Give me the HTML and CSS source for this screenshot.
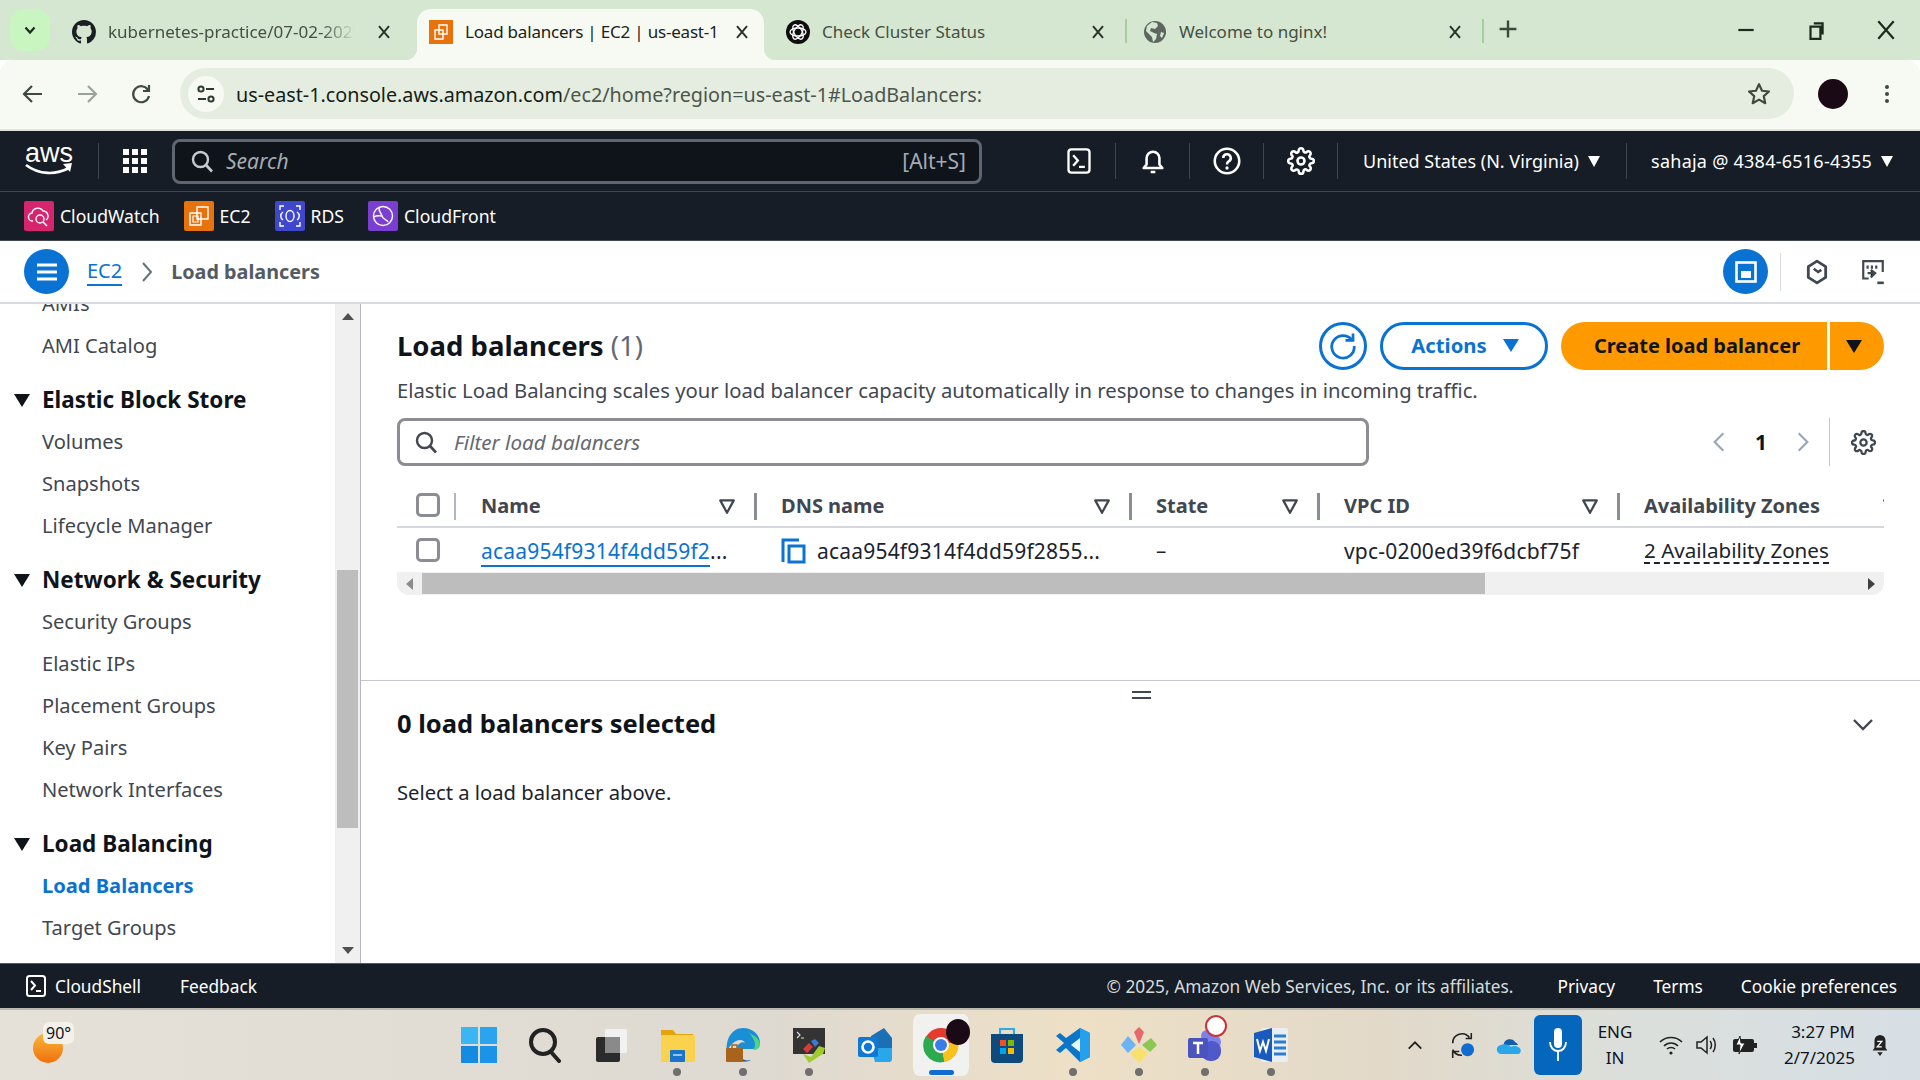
FILE: index.html
```html
<!DOCTYPE html>
<html lang="en">
<head>
    <meta charset="UTF-8">
    <title>Load balancers | EC2 | us-east-1</title>
    <link rel="stylesheet" href="styles.css">
</head>
<body>
    <svg class="defs" width="0" height="0">
        <symbol id="gear" viewBox="0 0 24 24"><path fill="none" stroke="currentColor" stroke-width="2.2" d="M12 15a3 3 0 1 0 0-6 3 3 0 0 0 0 6z"/><path fill="none" stroke="currentColor" stroke-width="2.2" stroke-linejoin="round" d="M19.4 15a1.65 1.65 0 0 0 .33 1.82l.06.06a2 2 0 0 1 0 2.83 2 2 0 0 1-2.83 0l-.06-.06a1.65 1.65 0 0 0-1.82-.33 1.65 1.65 0 0 0-1 1.51V21a2 2 0 0 1-2 2 2 2 0 0 1-2-2v-.09A1.65 1.65 0 0 0 9 19.4a1.65 1.65 0 0 0-1.82.33l-.06.06a2 2 0 0 1-2.83 0 2 2 0 0 1 0-2.83l.06-.06a1.65 1.65 0 0 0 .33-1.82 1.65 1.65 0 0 0-1.51-1H3a2 2 0 0 1-2-2 2 2 0 0 1 2-2h.09A1.65 1.65 0 0 0 4.6 9a1.65 1.65 0 0 0-.33-1.82l-.06-.06a2 2 0 0 1 0-2.83 2 2 0 0 1 2.83 0l.06.06a1.65 1.65 0 0 0 1.82.33H9a1.65 1.65 0 0 0 1-1.51V3a2 2 0 0 1 2-2 2 2 0 0 1 2 2v.09a1.65 1.65 0 0 0 1 1.51 1.65 1.65 0 0 0 1.82-.33l.06-.06a2 2 0 0 1 2.83 0 2 2 0 0 1 0 2.83l-.06.06a1.65 1.65 0 0 0-.33 1.82V9a1.65 1.65 0 0 0 1.51 1H21a2 2 0 0 1 2 2 2 2 0 0 1-2 2h-.09a1.65 1.65 0 0 0-1.51 1z"/></symbol>
        <symbol id="close" viewBox="0 0 24 24"><path fill="none" stroke="currentColor" stroke-width="2.4" d="M6 5l12 14M18 5L6 19"/></symbol>
        <symbol id="shell" viewBox="0 0 24 24"><rect x="3" y="2" width="18" height="20" rx="2.5" fill="none" stroke="currentColor" stroke-width="2"/><path fill="none" stroke="currentColor" stroke-width="2" d="M7 7l4 4.5L7 16M12 17h5"/></symbol>
        <symbol id="filter" viewBox="0 0 16 16"><path fill="none" stroke="currentColor" stroke-width="2" stroke-linejoin="round" d="M2 3h12l-6 11z"/></symbol>
        <symbol id="search" viewBox="0 0 24 24"><circle cx="10.5" cy="10.5" r="7.5" fill="none" stroke="currentColor" stroke-width="2.4"/><path stroke="currentColor" stroke-width="2.6" d="M16 16l6 6.5"/></symbol>
    </svg>

    <!-- chrome tabs -->
    <div class="tabstrip">
        <div class="tab-search"><svg width="14" height="14" viewBox="0 0 14 14"><path fill="none" stroke="#1c2b1c" stroke-width="2.2" d="M2.5 4.5L7 9.5l4.5-5"/></svg></div>
        <div class="tab">
            <svg class="favicon" viewBox="0 0 16 16"><path fill="#1b1f23" d="M8 0C3.58 0 0 3.58 0 8c0 3.54 2.29 6.53 5.47 7.59.4.07.55-.17.55-.38 0-.19-.01-.82-.01-1.49-2.01.37-2.53-.49-2.69-.94-.09-.23-.48-.94-.82-1.13-.28-.15-.68-.52-.01-.53.63-.01 1.08.58 1.23.82.72 1.21 1.87.87 2.33.66.07-.52.28-.87.51-1.07-1.78-.2-3.64-.89-3.64-3.95 0-.87.31-1.59.82-2.15-.08-.2-.36-1.02.08-2.12 0 0 .67-.21 2.2.82.64-.18 1.32-.27 2-.27s1.36.09 2 .27c1.53-1.04 2.2-.82 2.2-.82.44 1.1.16 1.92.08 2.12.51.56.82 1.27.82 2.15 0 3.07-1.87 3.75-3.65 3.95.29.25.54.73.54 1.48 0 1.07-.01 1.93-.01 2.2 0 .21.15.46.55.38A8.01 8.01 0 0016 8c0-4.42-3.58-8-8-8z"/></svg>
            <span class="tab-title tab-fade">kubernetes-practice/07-02-2025</span>
            <svg class="tab-x"><use href="#close"/></svg>
        </div>
        <div class="tab tab-active">
            <svg class="favicon" viewBox="0 0 24 24"><rect width="24" height="24" fill="#e8730c"/><path fill="none" stroke="#fff" stroke-width="1.4" d="M10 5h8v9h-8zM6 10h8v9H6z"/></svg>
            <span class="tab-title">Load balancers | EC2 | us-east-1</span>
            <svg class="tab-x"><use href="#close"/></svg>
        </div>
        <div class="tab tab-sep">
            <svg class="favicon" viewBox="0 0 24 24"><circle cx="12" cy="12" r="12" fill="#0d0d0d"/><g fill="none" stroke="#fff" stroke-width="1.3"><ellipse cx="12" cy="12" rx="8" ry="4"/><ellipse cx="12" cy="12" rx="8" ry="4" transform="rotate(60 12 12)"/><ellipse cx="12" cy="12" rx="8" ry="4" transform="rotate(120 12 12)"/></g></svg>
            <span class="tab-title">Check Cluster Status</span>
            <svg class="tab-x"><use href="#close"/></svg>
        </div>
        <div class="tab tab-sep">
            <svg class="favicon" viewBox="0 0 24 24"><circle cx="12" cy="12" r="11" fill="#5f6660"/><path fill="#d5e7d0" d="M9 2l5 1 1 3-3 3-4-1-1 3 4 2 3 1-1 5-3 3-1-5-3-3-3-3 1-5z M18 12l3 1-2 5-2-2z"/></svg>
            <span class="tab-title">Welcome to nginx!</span>
            <svg class="tab-x"><use href="#close"/></svg>
        </div>
        <svg class="tab-new" viewBox="0 0 20 20"><path stroke="#3b4a3b" stroke-width="2" d="M10 3v14M3 10h14"/></svg>
        <div class="win-controls">
            <svg viewBox="0 0 20 20"><path stroke="#1c2b1c" stroke-width="2" d="M3 10h14"/></svg>
            <svg viewBox="0 0 20 20"><path fill="none" stroke="#1c2b1c" stroke-width="2" d="M5 7h9v11H5zM8 4h8v10"/></svg>
            <svg viewBox="0 0 20 20"><path stroke="#1c2b1c" stroke-width="2" d="M3 2l14 16M17 2L3 18"/></svg>
        </div>
    </div>

    <!-- chrome toolbar -->
    <div class="toolbar">
        <svg class="tool-ico" viewBox="0 0 24 24"><path fill="none" stroke="#3f4a3f" stroke-width="2.2" d="M21 12H4M11 4l-8 8 8 8"/></svg>
        <svg class="tool-ico" viewBox="0 0 24 24"><path fill="none" stroke="#9aa39a" stroke-width="2.2" d="M3 12h17M13 4l8 8-8 8"/></svg>
        <svg class="tool-ico" viewBox="0 0 24 24"><path fill="none" stroke="#3f4a3f" stroke-width="2.2" d="M19 8a8 8 0 1 0 1 6M20 3v6h-6"/></svg>
        <div class="omnibox">
            <div class="site-info"><svg width="22" height="22" viewBox="0 0 22 22"><g fill="none" stroke="#2f3a2f" stroke-width="2"><circle cx="6" cy="6" r="2.6"/><circle cx="16" cy="16" r="2.6"/><path d="M11 6h8M3 16h8"/></g></svg></div>
            <span class="url"><span class="url-host">us-east-1.console.aws.amazon.com</span>/ec2/home?region=us-east-1#LoadBalancers:</span>
            <svg class="star" viewBox="0 0 24 24"><path fill="none" stroke="#3f4a3f" stroke-width="2" stroke-linejoin="round" d="M12 3l2.8 6 6.4.7-4.8 4.3 1.4 6.5L12 17.2l-5.8 3.3 1.4-6.5-4.8-4.3 6.4-.7z"/></svg>
        </div>
        <div class="avatar"></div>
        <svg class="kebab" viewBox="0 0 6 24"><g fill="#3f4a3f"><circle cx="3" cy="5" r="2"/><circle cx="3" cy="12" r="2"/><circle cx="3" cy="19" r="2"/></g></svg>
    </div>

    <!-- aws top nav -->
    <header class="topnav">
        <div class="aws-logo">
            <span>aws</span>
            <svg width="48" height="14" viewBox="0 0 48 14"><path fill="none" stroke="#fff" stroke-width="2.6" d="M1 2c13 10 30 10 43 3"/><path fill="#fff" d="M38 1l9-1-2 9z"/></svg>
        </div>
        <svg class="waffle" viewBox="0 0 24 24"><g fill="#fff"><rect x="0" y="0" width="6" height="6"/><rect x="9" y="0" width="6" height="6"/><rect x="18" y="0" width="6" height="6"/><rect x="0" y="9" width="6" height="6"/><rect x="9" y="9" width="6" height="6"/><rect x="18" y="9" width="6" height="6"/><rect x="0" y="18" width="6" height="6"/><rect x="9" y="18" width="6" height="6"/><rect x="18" y="18" width="6" height="6"/></g></svg>
        <div class="nav-search">
            <svg class="nav-search-ico"><use href="#search"/></svg>
            <span class="nav-search-text">Search</span>
            <span class="nav-search-key">[Alt+S]</span>
        </div>
        <div class="nav-right">
            <div class="nav-ico"><svg><use href="#shell"/></svg></div>
            <div class="nav-ico"><svg viewBox="0 0 24 24"><path fill="none" stroke="currentColor" stroke-width="2.2" stroke-linejoin="round" d="M4 18h16l-2.5-3V9.5a5.5 5.5 0 0 0-11 0V15zM10 21.5h4"/></svg></div>
            <div class="nav-ico"><svg viewBox="0 0 24 24"><circle cx="12" cy="12" r="10.5" fill="none" stroke="currentColor" stroke-width="2.2"/><path fill="none" stroke="currentColor" stroke-width="2.2" d="M8.8 9.5a3.2 3.2 0 1 1 4.6 2.8c-1 .6-1.4 1.2-1.4 2.6"/><circle cx="12" cy="18" r="1.4" fill="currentColor"/></svg></div>
            <div class="nav-ico"><svg><use href="#gear"/></svg></div>
            <div class="nav-menu nav-region">United States (N. Virginia)<i class="caret"></i></div>
            <div class="nav-menu nav-user">sahaja @ 4384-6516-4355<i class="caret"></i></div>
        </div>
    </header>

    <!-- favorites bar -->
    <nav class="svcbar">
        <a class="svc"><svg class="svc-ico" viewBox="0 0 30 30"><rect width="30" height="30" rx="2" fill="#d6246e"/><path fill="none" stroke="#fff" stroke-width="1.4" d="M9 20a4 4 0 0 1-1-8 6 6 0 0 1 11-2 5 5 0 0 1 3 9"/><circle cx="16" cy="18" r="4" fill="none" stroke="#fff" stroke-width="1.4"/><path stroke="#fff" stroke-width="1.6" d="M19 21l4 4"/></svg>CloudWatch</a>
        <a class="svc"><svg class="svc-ico" viewBox="0 0 30 30"><rect width="30" height="30" rx="2" fill="#e8730c"/><path fill="none" stroke="#fff" stroke-width="1.4" d="M13 6h11v12H13zM6 12h11v12H6z"/><path fill="none" stroke="#fff" stroke-width="1.2" d="M9 15h5v6H9z"/></svg>EC2</a>
        <a class="svc"><svg class="svc-ico" viewBox="0 0 30 30"><rect width="30" height="30" rx="2" fill="#3f48cc"/><g fill="none" stroke="#fff" stroke-width="1.4"><ellipse cx="15" cy="15" rx="4" ry="5.5"/><path d="M5 9V5h4M25 9V5h-4M5 21v4h4M25 21v4h-4M8 11c-3 2-3 6 0 8M22 11c3 2 3 6 0 8"/></g></svg>RDS</a>
        <a class="svc"><svg class="svc-ico" viewBox="0 0 30 30"><rect width="30" height="30" rx="2" fill="#7a3fd1"/><g fill="none" stroke="#fff" stroke-width="1.4"><circle cx="15" cy="15" r="9.5"/><path d="M11 7c0 5 2 4 3 8s5 3 6 6M6 16c3-2 5-1 8-1"/></g></svg>CloudFront</a>
    </nav>

    <div class="crumbs">
        <div class="round-btn"><svg width="24" height="20" viewBox="0 0 24 20"><path stroke="#fff" stroke-width="3" d="M2 3h20M2 10h20M2 17h20"/></svg></div>
        <a class="crumb-link">EC2</a>
        <svg class="crumb-sep" viewBox="0 0 12 24"><path fill="none" stroke="#687078" stroke-width="2" d="M2 3l8 9-8 9"/></svg>
        <span class="crumb-now">Load balancers</span>
        <div class="crumbs-right">
            <div class="round-btn"><svg width="24" height="24" viewBox="0 0 24 24"><rect x="2.5" y="2.5" width="19" height="19" fill="none" stroke="#fff" stroke-width="2.6"/><rect x="7" y="11" width="10" height="7" fill="#fff"/></svg></div>
            <div class="crumb-div"></div>
            <svg class="crumb-ico" viewBox="0 0 24 24"><path fill="none" stroke="#414750" stroke-width="2.6" stroke-linejoin="round" d="M12 2l8 5v10l-8 5-8-5V7z"/><path fill="none" stroke="#414750" stroke-width="2.4" d="M9 9l4 3 3-2"/></svg>
            <svg class="crumb-ico" viewBox="0 0 24 24"><path fill="none" stroke="#414750" stroke-width="2" d="M8 18H3V2h18v10"/><path stroke="#414750" stroke-width="2" d="M7 6v3M11 6v3M15 6v3M7 13h7M10 10l4 3-4 4"/><path stroke="#414750" stroke-width="2.4" d="M16 22h6"/></svg>
        </div>
    </div>

    <div class="console">
        <aside class="sidebar">
            <div class="side-scroll">
                <a class="side-item">AMIs</a>
                <a class="side-item">AMI Catalog</a>
                <div class="side-head"><i class="side-caret"></i>Elastic Block Store</div>
                <a class="side-item">Volumes</a>
                <a class="side-item">Snapshots</a>
                <a class="side-item">Lifecycle Manager</a>
                <div class="side-head"><i class="side-caret"></i>Network &amp; Security</div>
                <a class="side-item">Security Groups</a>
                <a class="side-item">Elastic IPs</a>
                <a class="side-item">Placement Groups</a>
                <a class="side-item">Key Pairs</a>
                <a class="side-item">Network Interfaces</a>
                <div class="side-head"><i class="side-caret"></i>Load Balancing</div>
                <a class="side-item side-active">Load Balancers</a>
                <a class="side-item">Target Groups</a>
                <a class="side-item">Trust Stores</a>
            </div>
            <div class="vscroll">
                <i class="arrow-up"></i>
                <div class="vscroll-track"><div class="vscroll-thumb"></div></div>
                <i class="arrow-down"></i>
            </div>
        </aside>

        <main class="content">
            <section class="panel-top">
                <div class="page-head">
                    <h1>Load balancers <span class="count">(1)</span></h1>
                    <div class="actions">
                        <button class="btn-refresh"><svg width="30" height="30" viewBox="0 0 24 24"><path fill="none" stroke="#0972d3" stroke-width="2.2" d="M19 7a9 9 0 1 0 2 5"/><path fill="none" stroke="#0972d3" stroke-width="2.2" d="M14 7.5h6V2"/></svg></button>
                        <button class="btn-actions">Actions<i class="caret-blue"></i></button>
                        <div class="btn-split">
                            <button class="btn-primary">Create load balancer</button>
                            <button class="btn-primary-drop"><i class="caret-dark"></i></button>
                        </div>
                    </div>
                </div>
                <p class="page-desc">Elastic Load Balancing scales your load balancer capacity automatically in response to changes in incoming traffic.</p>

                <div class="filter-row">
                    <div class="filter-box">
                        <svg class="filter-ico"><use href="#search"/></svg>
                        <span>Filter load balancers</span>
                    </div>
                    <div class="pager">
                        <svg viewBox="0 0 12 24"><path fill="none" stroke="#9ba7b6" stroke-width="2" d="M10 4l-8 8 8 8"/></svg>
                        <span class="page-num">1</span>
                        <svg viewBox="0 0 12 24"><path fill="none" stroke="#9ba7b6" stroke-width="2" d="M2 4l8 8-8 8"/></svg>
                    </div>
                    <div class="pager-gear"><svg><use href="#gear"/></svg></div>
                </div>

                <div class="lb-table">
                    <div class="th th-check"><i class="check"></i></div>
                    <div class="th">Name<svg class="th-filter"><use href="#filter"/></svg></div>
                    <div class="th">DNS name<svg class="th-filter"><use href="#filter"/></svg></div>
                    <div class="th">State<svg class="th-filter"><use href="#filter"/></svg></div>
                    <div class="th">VPC ID<svg class="th-filter"><use href="#filter"/></svg></div>
                    <div class="th th-last">Availability Zones<svg class="th-filter"><use href="#filter"/></svg></div>

                    <div class="td td-check"><i class="check"></i></div>
                    <div class="td td-id"><a class="lb-link"><span class="lb-link-text">acaa954f9314f4dd59f2</span>...</a></div>
                    <div class="td td-id"><svg class="copy-ico" viewBox="0 0 26 26"><path fill="none" stroke="#0972d3" stroke-width="3" d="M2 24V2h16"/><rect x="8" y="8" width="15" height="16" fill="none" stroke="#0972d3" stroke-width="3"/></svg><span>acaa954f9314f4dd59f2855...</span></div>
                    <div class="td">–</div>
                    <div class="td td-id">vpc-0200ed39f6dcbf75f</div>
                    <div class="td"><span class="dashed">2 Availability Zones</span></div>
                </div>
                <div class="hscroll">
                    <i class="arrow-left"></i>
                    <div class="hscroll-track"><div class="hscroll-thumb"></div></div>
                    <i class="arrow-right"></i>
                </div>
            </section>

            <section class="panel-bottom">
                <div class="split-handle"></div>
                <div class="detail-head">
                    <h2>0 load balancers selected</h2>
                    <svg width="22" height="14" viewBox="0 0 22 14"><path fill="none" stroke="#414750" stroke-width="2.4" d="M2 2l9 9 9-9"/></svg>
                </div>
                <p class="detail-text">Select a load balancer above.</p>
            </section>
        </main>
    </div>

    <footer class="footer">
        <svg class="foot-ico"><use href="#shell"/></svg>
        <a class="foot-shell">CloudShell</a>
        <a class="foot-feedback">Feedback</a>
        <span class="foot-copy">© 2025, Amazon Web Services, Inc. or its affiliates.</span>
        <a class="foot-link">Privacy</a>
        <a class="foot-link">Terms</a>
        <a class="foot-link">Cookie preferences</a>
    </footer>

    <!-- windows taskbar -->
    <div class="taskbar">
        <div class="weather">
            <svg width="32" height="38" viewBox="0 0 32 38"><defs><linearGradient id="sun" x1="0" y1="0" x2="0" y2="1"><stop offset="0" stop-color="#f8b83a"/><stop offset="1" stop-color="#f0700d"/></linearGradient></defs><circle cx="16" cy="20" r="15" fill="url(#sun)"/></svg>
            <span class="weather-temp">90°</span>
        </div>
        <div class="task-icons">
            <div class="task-app"><svg viewBox="0 0 36 36"><g fill="#1b93e6"><path d="M0 0h17v17H0z" fill="#3cb6f3"/><path d="M19 0h17v17H19z" fill="#2aa4ee"/><path d="M0 19h17v17H0z" fill="#148ae0"/><path d="M19 19h17v17H19z"/></g></svg></div>
            <div class="task-app"><svg viewBox="0 0 36 36"><circle cx="16" cy="15" r="12" fill="none" stroke="#222" stroke-width="4"/><path stroke="#222" stroke-width="4" stroke-linecap="round" d="M24 25l8 9"/></svg></div>
            <div class="task-app"><svg viewBox="0 0 36 36"><rect x="12" y="2" width="22" height="24" rx="2" fill="#f2f2f2"/><rect x="3" y="10" width="24" height="25" rx="2" fill="#2b2b2b"/><rect x="12" y="10" width="15" height="16" fill="#8a8a8a"/></svg></div>
            <div class="task-app"><i class="dot"></i><svg viewBox="0 0 36 36"><path fill="#e2a40c" d="M2 3h12l3 4h17v6H2z"/><rect x="2" y="8" width="34" height="27" rx="1" fill="#fbd24d"/><rect x="11" y="23" width="15" height="12" rx="1" fill="#1a74c9"/><path stroke="#bfe0fa" stroke-width="1.5" d="M14 28h9"/></svg></div>
            <div class="task-app"><i class="dot"></i><svg viewBox="0 0 36 36"><path fill="#1b8fd6" d="M18 1c10 0 17 7 17 15 0 5-5 6-9 6H12c0-6 6-8 8-6-1-3-5-4-9-2C7 16 2 22 2 26 0 12 7 1 18 1z"/><path fill="#4ed488" d="M24 6c6 3 11 6 11 12 0 3-3 5-7 5 4-4 2-11-4-17z"/><path fill="#12558f" d="M10 22c1 8 9 13 16 11-5 3-18 2-22-6 0-3 3-5 6-5z"/><rect x="1" y="21" width="17" height="14" rx="1" fill="#a8641c"/><rect x="7" y="18" width="5" height="4" fill="none" stroke="#a8641c" stroke-width="1.5"/></svg></div>
            <div class="task-app"><i class="dot"></i><svg viewBox="0 0 36 36"><rect x="2" y="1" width="32" height="26" fill="#333"/><path stroke="#ddd" stroke-width="1.2" fill="none" d="M6 5l3 3-3 3M10 11h3"/><path fill="#d93a3a" d="M12 22l6-6 4 4-6 6z"/><path fill="#3a7bd9" d="M20 14l4-2 4 4-4 4z"/><path fill="#9ccc2d" d="M28 19l6 2-2 6-5 3-9 6-6-9 8 3z"/></svg></div>
            <div class="task-app"><svg viewBox="0 0 36 36"><path fill="#1a6fb5" d="M14 9L27 1l8 10v10H14z"/><path fill="#28a8ea" d="M14 21h21v11a3 3 0 0 1-3 3H18z"/><rect x="1" y="10" width="20" height="20" rx="2" fill="#0f78d4"/><circle cx="11" cy="20" r="5.5" fill="none" stroke="#fff" stroke-width="2.6"/></svg></div>
            <div class="task-app task-active">
                <svg viewBox="0 0 36 36"><circle cx="18" cy="18" r="17" fill="#e33b2e"/><path fill="#f9c11c" d="M18 18L35 14a17 17 0 0 1-14 21z"/><path fill="#2da94f" d="M18 18l3 17A17 17 0 0 1 3 9z"/><circle cx="18" cy="18" r="8" fill="#fff"/><circle cx="18" cy="18" r="6" fill="#3b7de8"/></svg>
                <i class="chrome-blob"></i><i class="task-bar"></i>
            </div>
            <div class="task-app"><svg viewBox="0 0 36 36"><path fill="none" stroke="#2ea8f0" stroke-width="2" d="M11 8V2h14v6"/><path fill="#0f4a7c" d="M2 7h32v25a4 4 0 0 1-4 4H6a4 4 0 0 1-4-4z"/><path fill="#f25022" d="M11 13h6v6h-6z"/><path fill="#7fba00" d="M19 13h6v6h-6z"/><path fill="#00a4ef" d="M11 21h6v6h-6z"/><path fill="#ffb900" d="M19 21h6v6h-6z"/></svg></div>
            <div class="task-app"><i class="dot"></i><svg viewBox="0 0 36 36"><path fill="#0a75c9" d="M25 1l10 5v24l-10 5-14-14-6 5-4-3 8-7-8-7 4-3 6 5z"/><path fill="#24a0ec" d="M25 1l10 5v24l-10 5z"/><path fill="#e9f5fd" d="M25 11v14l-9-7z"/></svg></div>
            <div class="task-app"><i class="dot"></i><svg viewBox="0 0 36 36"><path fill="#e8676b" d="M18 0l5 5-5 12-5-12z"/><path fill="#8bc751" d="M30 11l6 7-7 7-8-7z"/><path fill="#6cb2f5" d="M7 9l8 9-8 8-7-8z"/><path fill="#f9df6c" d="M18 20l9 6-9 10-9-10z"/></svg></div>
            <div class="task-app">
                <i class="dot"></i>
                <svg viewBox="0 0 36 36"><circle cx="27" cy="15" r="7" fill="#7b83eb"/><rect x="14" y="14" width="20" height="20" rx="9" fill="#5059c9"/><circle cx="20" cy="9" r="6" fill="#7b83eb"/><rect x="1" y="11" width="20" height="20" rx="2" fill="#4b53bc"/><path stroke="#fff" stroke-width="2.5" d="M6 16h10M11 16v11"/></svg>
                <i class="teams-badge"></i>
            </div>
            <div class="task-app"><i class="dot"></i><svg viewBox="0 0 36 36"><rect x="8" y="1" width="27" height="34" rx="2" fill="#e9eef5"/><path stroke="#2b7cd3" stroke-width="3" d="M21 9h12M21 15h12M21 21h12M21 27h12"/><path fill="#185abd" d="M1 6l18-5v34L1 30z"/><path fill="none" stroke="#fff" stroke-width="2" d="M4 12l3 12 3-9 3 9 3-12"/></svg></div>
        </div>
        <div class="tray">
            <svg class="tray-ico tray-chev" viewBox="0 0 20 20"><path fill="none" stroke="#222" stroke-width="2" d="M3 14l7-7 7 7"/></svg>
            <svg class="tray-ico tray-sync" viewBox="0 0 28 32"><path fill="none" stroke="#222" stroke-width="1.7" d="M4 14a10 10 0 0 1 18-6M24 3v6h-6M14 27a10 10 0 0 1-10-6M4 30v-7h7"/><circle cx="20" cy="21" r="7" fill="#0f6cd0"/></svg>
            <svg class="tray-ico tray-cloud" viewBox="0 0 28 20"><path fill="#0f5fae" d="M8 10a7 7 0 0 1 13-3 5 5 0 0 1 3 3z"/><path fill="#28a8ea" d="M6 20a5 5 0 0 1-1-10c4-2 10 0 11 2 4-2 11 0 11 4s-3 4-4 4z"/></svg>
            <div class="tray-mic"><svg width="20" height="36" viewBox="0 0 20 36"><rect x="6" y="1" width="8" height="20" rx="4" fill="#fff"/><path fill="none" stroke="#fff" stroke-width="1.8" d="M2 15c0 12 16 12 16 0M10 24v10"/></svg></div>
            <div class="tray-lang">ENG<br>IN</div>
            <svg class="tray-ico tray-wifi" viewBox="0 0 24 20"><path fill="none" stroke="#222" stroke-width="1.7" d="M1 7c6-6 16-6 22 0M5 11c4-4 10-4 14 0M8 14c2-2 6-2 8 0"/><circle cx="12" cy="18" r="1.6" fill="#222"/></svg>
            <svg class="tray-ico tray-vol" viewBox="0 0 24 24"><path fill="none" stroke="#222" stroke-width="1.5" d="M2 9v6h4l6 5V4L6 9zM15 8c2 2 2 6 0 8M18 5c3 4 3 10 0 14"/></svg>
            <svg class="tray-ico tray-batt" viewBox="0 0 26 20"><rect x="1" y="4" width="21" height="13" rx="2" fill="#222"/><rect x="22" y="8" width="3" height="5" fill="#222"/><path fill="#fff" d="M8 1L4 10h4l-1 9 6-11H9z" stroke="#222"/></svg>
            <div class="tray-clock">3:27 PM<br>2/7/2025</div>
            <svg class="tray-ico tray-bell" viewBox="0 0 24 28"><path fill="#222" d="M4 20l2-3V9a6 6 0 0 1 12 0v8l2 3zM9 22h6l-3 4z"/><path fill="none" stroke="#fff" stroke-width="1.4" d="M9 10h5l-5 6h5"/></svg>
        </div>
    </div>
</body>
</html>
```

FILE: styles.css
```css
* {
    box-sizing: border-box;
}
html, body {
    margin: 0;
    height: 100%;
}
body {
    width: 1920px;
    height: 1080px;
    overflow: hidden;
    display: flex;
    flex-direction: column;
    font-family: "Noto Sans", "Open Sans", sans-serif;
    color: #0f141a;
    background-color: #fff;
}
.defs {
    position: absolute;
}
a {
    text-decoration: none;
}
i {
    display: block;
}
h1, h2, p {
    margin: 0;
}

/* tabs */
.tabstrip {
    height: 60px;
    flex: none;
    display: flex;
    align-items: flex-end;
    background-color: #d5e7d0;
    color: #454f45;
    font-size: 17px;
}
.tab-search {
    width: 40px;
    height: 42px;
    margin: 0 5px 9px 10px;
    border-radius: 14px;
    background-color: #c9f5c0;
    display: flex;
    align-items: center;
    justify-content: center;
}
.tab {
    width: 357px;
    height: 51px;
    padding: 0 18px 6px 17px;
    display: flex;
    align-items: center;
    position: relative;
}
.tab-active {
    margin: 0 5px;
    width: 347px;
    padding: 0 12px 6px 12px;
    background-color: #f6faf2;
    border-radius: 14px 14px 0 0;
    color: #1b221b;
    letter-spacing: -0.2px;
}
.tab-active .tab-x {
    margin-left: 6px;
}
.tab-active::before, .tab-active::after {
    content: "";
    position: absolute;
    bottom: 0;
    width: 12px;
    height: 12px;
}
.tab-active::before {
    left: -12px;
    background: radial-gradient(circle at 0 0, transparent 12px, #f6faf2 12.5px);
}
.tab-active::after {
    right: -12px;
    background: radial-gradient(circle at 100% 0, transparent 12px, #f6faf2 12.5px);
}
.tab-sep::after {
    content: "";
    position: absolute;
    right: -1px;
    top: 10px;
    width: 2px;
    height: 24px;
    background-color: #a4cf9b;
}
.favicon {
    width: 24px;
    height: 24px;
    flex: none;
    margin-right: 12px;
}
.tab-title {
    flex: 1;
    min-width: 0;
    overflow: hidden;
    white-space: nowrap;
}
.tab-fade {
    -webkit-mask-image: linear-gradient(90deg, #000 85%, transparent 98%);
    mask-image: linear-gradient(90deg, #000 85%, transparent 98%);
}
.tab-x {
    width: 20px;
    height: 20px;
    flex: none;
    margin-left: 14px;
    color: #2a332a;
}
.tab-new {
    width: 24px;
    height: 24px;
    margin: 0 0 19px 13px;
}
.win-controls {
    margin: 0 23px 19px auto;
    display: flex;
    gap: 48px;
}
.win-controls svg {
    width: 22px;
    height: 22px;
}

/* toolbar */
.toolbar {
    height: 71px;
    flex: none;
    display: flex;
    align-items: center;
    padding: 0 0 2px 21px;
    background-color: #f6faf2;
    border-bottom: 2px solid #dfe3dd;
    border-radius: 14px 14px 0 0;
}
.tool-ico {
    width: 24px;
    height: 24px;
    margin-right: 30px;
}
.omnibox {
    width: 1614px;
    height: 51px;
    margin-left: -3px;
    padding: 0 22px 0 8px;
    display: flex;
    align-items: center;
    background-color: #e4ede0;
    border-radius: 26px;
}
.site-info {
    width: 36px;
    height: 36px;
    border-radius: 50%;
    background-color: #f6faf2;
    display: flex;
    align-items: center;
    justify-content: center;
    margin-right: 12px;
}
.url {
    flex: 1;
    padding-top: 1px;
    font-size: 19.75px;
    color: #4c564c;
    white-space: nowrap;
}
.url-host {
    color: #161d16;
}
.star {
    width: 26px;
    height: 26px;
}
.avatar {
    width: 30px;
    height: 30px;
    margin-left: 24px;
    border-radius: 50%;
    background-color: #1a0a16;
}
.kebab {
    width: 6px;
    height: 24px;
    margin-left: 36px;
}

/* aws nav */
.topnav {
    height: 61px;
    flex: none;
    display: flex;
    align-items: center;
    background-color: #161d26;
    border-bottom: 1px solid #414750;
    color: #fff;
    font-size: 18px;
}
.aws-logo {
    width: 74px;
    height: 36px;
    margin-left: 25px;
    padding-right: 25px;
    border-right: 1px solid #414750;
    display: flex;
    flex-direction: column;
    align-items: center;
    font: 400 27px/20px "Liberation Sans", sans-serif;
}
.aws-logo svg {
    flex: none;
}
.waffle {
    width: 24px;
    height: 24px;
    margin: 0 26px 0 24px;
}
.nav-search {
    width: 810px;
    height: 45px;
    margin-left: -1px;
    padding: 0 13px 0 15px;
    display: flex;
    align-items: center;
    border: 3px solid #5f6670;
    border-radius: 8px;
    background-color: #0f141a;
    color: #a4abb5;
    font-size: 21px;
}
.nav-search-ico {
    width: 24px;
    height: 24px;
    color: #c6cbd2;
}
.nav-search-text {
    margin-left: 12px;
    flex: 1;
    font-style: italic;
}
.nav-right {
    display: flex;
    align-items: center;
    margin-left: 60px;
}
.nav-ico {
    width: 74px;
    height: 36px;
    display: flex;
    align-items: center;
    justify-content: center;
    border-right: 1px solid #414750;
    color: #fff;
}
.nav-ico svg {
    width: 28px;
    height: 30px;
}
.nav-menu {
    height: 36px;
    display: flex;
    align-items: center;
    white-space: nowrap;
}
.nav-region {
    padding: 0 26px 0 25px;
    border-right: 1px solid #414750;
}
.nav-user {
    padding-left: 24px;
    letter-spacing: 0.25px;
}
.caret {
    margin-left: 9px;
    width: 0;
    height: 0;
    border-left: 6px solid transparent;
    border-right: 6px solid transparent;
    border-top: 11px solid #fff;
}

/* favorites */
.svcbar {
    height: 48px;
    flex: none;
    padding-left: 24px;
    display: flex;
    align-items: center;
    gap: 24px;
    background-color: #161d26;
    color: #fff;
    font-size: 17.6px;
}
.svc {
    display: flex;
    align-items: center;
    color: #fff;
}
.svc-ico {
    width: 30px;
    height: 30px;
    margin-right: 6px;
}

/* breadcrumbs */
.crumbs {
    height: 64px;
    flex: none;
    display: flex;
    align-items: center;
    padding: 0 34px 0 24px;
    border-bottom: 2px solid #d8dbe0;
    border-top: 1px solid #414750;
    font-size: 20px;
}
.round-btn {
    width: 45px;
    height: 45px;
    border-radius: 50%;
    background-color: #0972d3;
    display: flex;
    align-items: center;
    justify-content: center;
    flex: none;
}
.crumb-link {
    margin-left: 18px;
    color: #0972d3;
    border-bottom: 2px solid #0972d3;
    line-height: 26px;
}
.crumb-sep {
    width: 12px;
    height: 24px;
    margin: 0 18px 0 19px;
}
.crumb-now {
    font-size: 19.8px;
    color: #545b64;
    font-weight: 700;
}
.crumbs-right {
    margin-left: auto;
    display: flex;
    align-items: center;
}
.crumb-div {
    width: 1px;
    height: 38px;
    margin: 0 23px 0 12px;
    background-color: #d8dbe0;
}
.crumb-ico {
    width: 26px;
    height: 28px;
}
.crumb-ico + .crumb-ico {
    margin-left: 30px;
}

/* sidebar */
.console {
    height: 659px;
    flex: none;
    display: flex;
}
.sidebar {
    width: 361px;
    flex: none;
    display: flex;
    border-right: 1px solid #b4b8be;
    overflow: hidden;
}
.side-scroll {
    flex: 1;
    min-width: 0;
    margin-top: -21.5px;
    padding-left: 42px;
    font-size: 20.1px;
    color: #414750;
}
.side-item {
    display: block;
    height: 42px;
    line-height: 42px;
    white-space: nowrap;
}
.side-head {
    position: relative;
    height: 42px;
    margin-top: 12px;
    line-height: 42px;
    font-size: 22.5px;
    font-weight: 700;
    color: #0f141a;
    white-space: nowrap;
}
.side-caret {
    position: absolute;
    left: -28px;
    top: 15px;
    width: 0;
    height: 0;
    border-left: 8px solid transparent;
    border-right: 8px solid transparent;
    border-top: 13px solid #0f141a;
}
.side-active {
    color: #0972d3;
    font-weight: 700;
}
.vscroll {
    width: 25px;
    flex: none;
    display: flex;
    flex-direction: column;
    align-items: center;
    background-color: #f0f0f0;
}
.vscroll-track {
    flex: 1;
    width: 100%;
    padding: 0 2px;
}
.vscroll-thumb {
    height: 258px;
    margin-top: 241px;
    background-color: #bdbdbd;
}
.arrow-up, .arrow-down {
    margin: 9px 0;
    border-left: 6px solid transparent;
    border-right: 6px solid transparent;
}
.arrow-up {
    border-bottom: 7px solid #505050;
}
.arrow-down {
    border-top: 7px solid #505050;
}

/* main */
.content {
    flex: 1;
    min-width: 0;
    display: flex;
    flex-direction: column;
}
.panel-top {
    height: 377px;
    flex: none;
    padding: 18px 36px 0 36px;
    border-bottom: 1px solid #c6c6cd;
}
.page-head {
    display: flex;
    align-items: center;
    justify-content: space-between;
    height: 48px;
}
h1 {
    margin-top: -2px;
    font-size: 27.5px;
    font-weight: 700;
    color: #0f141a;
}
.count {
    font-weight: 400;
    color: #656871;
}
.actions {
    display: flex;
    align-items: center;
}
button {
    font-family: inherit;
    cursor: pointer;
}
.btn-refresh {
    width: 48px;
    height: 48px;
    padding: 0;
    margin-right: 13px;
    border: 3px solid #0972d3;
    border-radius: 50%;
    background-color: #fff;
    display: flex;
    align-items: center;
    justify-content: center;
}
.btn-actions {
    width: 168px;
    height: 48px;
    margin-right: 13px;
    padding: 0 0 2px 2px;
    border: 3px solid #0972d3;
    border-radius: 24px;
    background-color: #fff;
    color: #0972d3;
    font-size: 20.3px;
    font-weight: 700;
    display: flex;
    align-items: center;
    justify-content: center;
    gap: 16px;
}
.caret-blue, .caret-dark {
    width: 0;
    height: 0;
    border-left: 8px solid transparent;
    border-right: 8px solid transparent;
}
.caret-blue {
    border-top: 13px solid #0972d3;
}
.caret-dark {
    border-top: 13px solid #0f141a;
}
.btn-split {
    display: flex;
    gap: 3px;
}
.btn-primary, .btn-primary-drop {
    height: 48px;
    border: 0;
    background-color: #ff9900;
    color: #0f141a;
    font-size: 20px;
    font-weight: 700;
}
.btn-primary {
    width: 266px;
    padding: 0 0 2px 6px;
    border-radius: 24px 0 0 24px;
}
.btn-primary-drop {
    width: 54px;
    padding: 0 0 0 16px;
    border-radius: 0 24px 24px 0;
}
.page-desc {
    margin-top: 6px;
    height: 28px;
    line-height: 28px;
    font-size: 20.25px;
    color: #414750;
    white-space: nowrap;
}
.filter-row {
    margin-top: 14px;
    height: 48px;
    display: flex;
    align-items: center;
}
.filter-box {
    width: 972px;
    height: 48px;
    padding: 0 14px;
    display: flex;
    align-items: center;
    border: 3px solid #8c8c94;
    border-radius: 8px;
    color: #656871;
    font-size: 20.6px;
    font-style: italic;
}
.filter-ico {
    width: 24px;
    height: 24px;
    margin-right: 16px;
    color: #424650;
}
.pager {
    margin-left: auto;
    display: flex;
    align-items: center;
    gap: 29px;
}
.pager svg {
    width: 14px;
    height: 26px;
}
.page-num {
    font-size: 21px;
    font-weight: 700;
}
.pager-gear {
    height: 48px;
    margin-left: 19px;
    padding: 0 8px 0 21px;
    display: flex;
    align-items: center;
    border-left: 1px solid #c6c6cd;
}
.pager-gear svg {
    width: 25px;
    height: 25px;
    color: #414750;
}
.lb-table {
    margin-top: 27px;
    display: grid;
    grid-template-columns: 58px 300px 375px 188px 300px 266px;
    overflow: hidden;
    white-space: nowrap;
}
.th {
    position: relative;
    height: 35px;
    padding: 0 19px 8px 26px;
    display: flex;
    align-items: center;
    justify-content: space-between;
    border-bottom: 2px solid #d5d8dc;
    font-size: 20px;
    font-weight: 700;
    color: #414750;
}
.th::after {
    content: "";
    position: absolute;
    right: -2px;
    top: 0;
    height: 27px;
    width: 3px;
    background-color: #8c8c94;
}
.th-check::after {
    right: -1px;
    width: 2px;
    background-color: #b4b8be;
}
.th-last {
    padding-right: 0;
}
.th-last::after {
    display: none;
}
.th-last .th-filter {
    margin-right: -16px;
}
.th-filter {
    width: 18px;
    height: 18px;
    color: #414750;
    flex: none;
}
.th-check {
    padding: 0 0 0 19px;
    align-items: flex-start;
}
.check {
    width: 24px;
    height: 24px;
    border: 3px solid #8c8c94;
    border-radius: 5px;
}
.td {
    height: 44px;
    padding-left: 26px;
    display: flex;
    align-items: center;
    font-size: 20.6px;
    color: #1b232d;
    white-space: nowrap;
}
.td-check {
    padding-left: 19px;
}
.td-id {
    font-size: 21px;
    letter-spacing: 0.2px;
    padding-top: 2px;
}
.lb-link {
    color: #1b232d;
}
.lb-link-text {
    color: #0972d3;
    border-bottom: 2px solid #0972d3;
    line-height: 24px;
}
.copy-ico {
    width: 26px;
    height: 26px;
    margin-right: 10px;
    flex: none;
}
.dashed {
    margin-top: 2px;
    border-bottom: 2px dashed #1b232d;
    line-height: 24px;
}
.hscroll {
    height: 23px;
    display: flex;
    align-items: center;
    background-color: #f0f0f0;
    border-radius: 0 0 12px 12px;
}
.hscroll-track {
    flex: 1;
    height: 100%;
    padding: 1px 0;
}
.hscroll-thumb {
    width: 1063px;
    height: 21px;
    background-color: #bdbdbd;
}
.arrow-left, .arrow-right {
    margin: 0 9px;
    border-top: 6px solid transparent;
    border-bottom: 6px solid transparent;
}
.arrow-left {
    border-right: 7px solid #8c8c8c;
}
.arrow-right {
    border-left: 7px solid #404040;
}
.panel-bottom {
    position: relative;
    flex: 1;
    padding: 0 36px;
}
.split-handle {
    position: absolute;
    top: 10px;
    left: 771px;
    width: 19px;
    height: 8px;
    border-top: 2px solid #414750;
    border-bottom: 2px solid #414750;
}
.detail-head {
    padding-top: 22px;
    height: 62px;
    display: flex;
    align-items: center;
    justify-content: space-between;
}
.detail-head svg {
    margin-right: 10px;
    margin-top: 3px;
}
h2 {
    font-size: 25.5px;
    font-weight: 700;
    color: #0f141a;
}
.detail-text {
    margin-top: 35px;
    line-height: 28px;
    font-size: 20.2px;
    color: #1b232d;
}

/* footer */
.footer {
    height: 45px;
    flex: none;
    padding: 0 23px 0 24px;
    display: flex;
    align-items: center;
    background-color: #161d26;
    border-top: 1px solid #545b64;
    color: #fff;
    font-size: 17.3px;
}
.footer a {
    color: #fff;
}
.foot-ico {
    width: 24px;
    height: 26px;
    color: #fff;
}
.foot-shell {
    margin-left: 7px;
}
.foot-feedback {
    margin-left: 39px;
}
.foot-copy {
    margin-left: auto;
    margin-right: 6px;
    color: #d5dbdb;
}
.foot-link {
    margin-left: 38px;
}

/* taskbar */
.taskbar {
    height: 72px;
    flex: none;
    position: relative;
    display: flex;
    align-items: center;
    border-top: 2px solid #b9b9b2;
    background: linear-gradient(90deg, #e5e1d8 0%, #ded9d1 40%, #eee0c6 56%, #e2d9c9 72%, #dbdfdb 85%, #d7dfe6 100%);
}
.weather {
    position: relative;
    width: 80px;
    height: 100%;
    margin-left: 32px;
    padding-top: 18px;
}
.weather-temp {
    position: absolute;
    left: 11px;
    top: 12px;
    padding: 0 3px;
    border-radius: 6px;
    background-color: #f4f1ea;
    font-size: 16px;
    line-height: 22px;
}
.task-icons {
    display: flex;
    margin-left: 334px;
}
.task-app {
    position: relative;
    width: 66px;
    height: 62px;
    display: flex;
    align-items: center;
    justify-content: center;
}
.task-app svg {
    width: 36px;
    height: 36px;
}
.dot {
    position: absolute;
    left: 29px;
    bottom: 0;
    width: 8px;
    height: 8px;
    border-radius: 50%;
    background-color: #6f6f6f;
}
.task-active {
    border-left: 5px solid transparent;
    border-right: 5px solid transparent;
    background-color: #f1f1ef;
    background-clip: padding-box;
    border-radius: 10px;
}
.chrome-blob {
    position: absolute;
    left: 33px;
    top: 5px;
    width: 24px;
    height: 26px;
    border-radius: 50%;
    background-color: #1a0a16;
}
.task-bar {
    position: absolute;
    left: 16px;
    bottom: 1px;
    width: 25px;
    height: 5px;
    border-radius: 3px;
    background-color: #0f6cd0;
}
.teams-badge {
    position: absolute;
    left: 33px;
    top: 1px;
    width: 22px;
    height: 22px;
    border-radius: 50%;
    border: 2px solid #c8323c;
    background-color: #fff;
}
.tray {
    margin-left: 102px;
    display: flex;
    align-items: center;
    height: 100%;
}
.tray-ico {
    flex: none;
}
.tray-chev {
    width: 18px;
    height: 18px;
}
.tray-sync {
    width: 26px;
    height: 30px;
    margin-left: 25px;
}
.tray-cloud {
    width: 26px;
    height: 18px;
    margin-left: 21px;
}
.tray-mic {
    width: 48px;
    height: 60px;
    margin-left: 12px;
    display: flex;
    align-items: center;
    justify-content: center;
    border-radius: 6px;
    background-color: #0467bd;
}
.tray-lang {
    width: 66px;
    text-align: center;
    font-size: 17px;
    line-height: 26px;
}
.tray-wifi {
    width: 24px;
    height: 20px;
    margin-left: 11px;
}
.tray-vol {
    width: 24px;
    height: 24px;
    margin-left: 12px;
}
.tray-batt {
    width: 26px;
    height: 20px;
    margin-left: 13px;
}
.tray-clock {
    width: 90px;
    margin-left: 7px;
    text-align: right;
    font-size: 17px;
    line-height: 26px;
}
.tray-bell {
    width: 22px;
    height: 26px;
    margin-left: 14px;
}
```
